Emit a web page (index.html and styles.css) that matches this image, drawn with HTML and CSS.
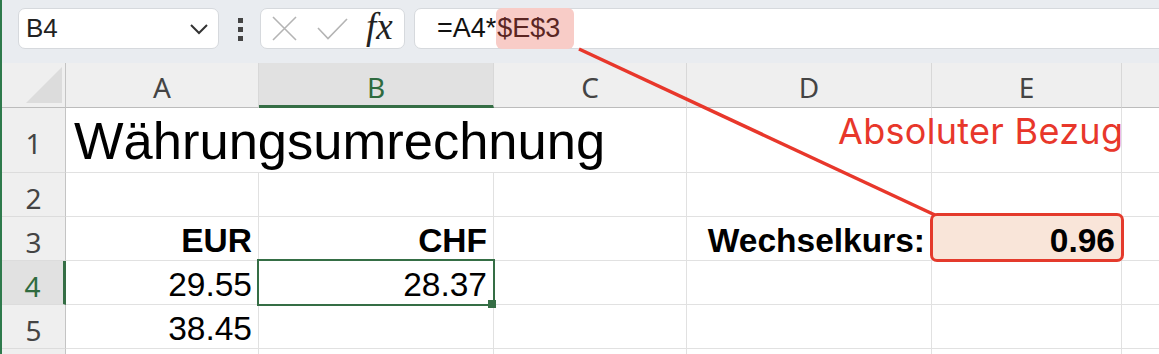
FILE: index.html
```html
<!DOCTYPE html>
<html lang="de">
<head>
    <meta charset="UTF-8">
    <title>Währungsumrechnung</title>
    <link rel="stylesheet" href="styles.css">
</head>
<body>
<div class="app">
    <div class="toolbar">
        <div class="namebox">
            <span>B4</span>
            <svg width="20" height="12" viewBox="0 0 20 12"><path d="M2 2 L10 10 L18 2" fill="none" stroke="#333" stroke-width="2"/></svg>
        </div>
        <div class="dots"><i></i><i></i><i></i></div>
        <div class="btns">
            <svg width="25" height="25" viewBox="0 0 25 25"><path d="M1 1 L24 24 M24 1 L1 24" stroke="#b4b4b4" stroke-width="1.6"/></svg>
            <svg width="31" height="23" viewBox="0 0 31 23"><path d="M1 11 L11 21.5 L30 2" fill="none" stroke="#b4b4b4" stroke-width="1.6"/></svg>
            <span class="fx">fx</span>
        </div>
        <div class="formula">=A4*<span class="ref">$E$3</span></div>
    </div>

    <div class="sheet">
        <!-- header -->
        <div class="hd corner"><i></i></div>
        <div class="hd">A</div>
        <div class="hd on">B</div>
        <div class="hd">C</div>
        <div class="hd">D</div>
        <div class="hd">E</div>
        <div class="hd"></div>

        <!-- row 1 -->
        <div class="rh">1</div>
        <div class="c title">Währungsumrechnung</div>
        <div class="c"></div>
        <div class="c"></div>
        <div class="c"></div>

        <!-- row 2 -->
        <div class="rh">2</div>
        <div class="c"></div>
        <div class="c"></div>
        <div class="c"></div>
        <div class="c"></div>
        <div class="c"></div>
        <div class="c"></div>

        <!-- row 3 -->
        <div class="rh">3</div>
        <div class="c b">EUR</div>
        <div class="c b">CHF</div>
        <div class="c"></div>
        <div class="c b">Wechselkurs:</div>
        <div class="c b callout"><span>0.96</span></div>
        <div class="c"></div>

        <!-- row 4 -->
        <div class="rh on">4</div>
        <div class="c">29.55</div>
        <div class="c sel">28.37</div>
        <div class="c"></div>
        <div class="c"></div>
        <div class="c"></div>
        <div class="c"></div>

        <!-- row 5 -->
        <div class="rh">5</div>
        <div class="c">38.45</div>
        <div class="c"></div>
        <div class="c"></div>
        <div class="c"></div>
        <div class="c"></div>
        <div class="c"></div>

        <!-- row 6, only its top edge is visible -->
        <div class="rh"></div>
        <div class="c"></div>
        <div class="c"></div>
        <div class="c"></div>
        <div class="c"></div>
        <div class="c"></div>
        <div class="c"></div>
    </div>

    <svg class="arrow" width="1159" height="354" viewBox="0 0 1159 354">
        <line x1="579" y1="49" x2="935" y2="215" stroke="#e8372b" stroke-width="3.5"/>
    </svg>
    <div class="note">Absoluter Bezug</div>
</div>
</body>
</html>
```

FILE: styles.css
```css
body {
    margin: 0;
    background: #ffffff;
    font-family: "Liberation Sans", Arial, sans-serif;
}
.app {
    position: relative;
    width: 1159px;
    height: 354px;
    overflow: hidden;
    border-left: 2px solid #2e7a4c;
    box-sizing: border-box;
}

/* toolbar */
.toolbar {
    height: 63px;
    background: #e9ecf0;
    display: flex;
    align-items: flex-start;
    padding: 8px 0 0 16px;
    box-sizing: border-box;
}
.namebox {
    width: 201px;
    height: 41px;
    box-sizing: border-box;
    background: #fff;
    border: 1px solid #d6d9dd;
    border-radius: 7px;
    display: flex;
    align-items: center;
    justify-content: space-between;
    padding: 0 9px 0 7px;
    font-size: 26px;
    color: #222;
}
.dots {
    margin: 10px 17px 0 19px;
    display: flex;
    flex-direction: column;
    gap: 4px;
}
.dots i {
    display: block;
    width: 5px;
    height: 5px;
    background: #444;
}
.btns {
    width: 145px;
    height: 41px;
    box-sizing: border-box;
    background: #fff;
    border: 1px solid #d6d9dd;
    border-radius: 7px;
    display: flex;
    align-items: center;
    padding: 0 0 0 11px;
    gap: 20px;
}
.fx {
    font-family: "Liberation Serif", "Times New Roman", serif;
    font-style: italic;
    font-size: 37px;
    color: #222;
    margin-left: -2px;
    margin-top: -4px;
}
.formula {
    flex: 1;
    height: 41px;
    margin: 0 -20px 0 9px;
    box-sizing: border-box;
    background: #fff;
    border: 1px solid #d6d9dd;
    border-radius: 7px;
    display: flex;
    align-items: center;
    padding-left: 22px;
    font-size: 27px;
    color: #111;
}
.formula .ref {
    align-self: stretch;
    margin: -1px 0;
    display: flex;
    align-items: center;
    padding: 0 14px 0 1px;
    background: #f8ccc7;
    border-radius: 6px;
    color: #5a2623;
}

/* sheet */
.sheet {
    display: grid;
    grid-template-columns: 64px 193px 235px 193px 245px 190px 40px;
    grid-template-rows: 45px 65px 44px 44px 44px 44px 10px;
}
.hd {
    background: #efefef;
    border-bottom: 1px solid #bcbcbc;
    border-right: 1px solid #d8d8d8;
    display: flex;
    align-items: center;
    justify-content: center;
    padding-top: 4px;
    box-sizing: border-box;
    font-family: "Noto Sans", sans-serif;
    font-size: 28px;
    color: #444;
}
.hd.on {
    background: #e1e1e1;
    color: #2f6b3f;
    border-bottom: 3px solid #356e45;
    padding-top: 6px;
}
.hd.corner {
    border-right: 1px solid #c4c4c4;
    align-items: flex-end;
    justify-content: flex-end;
    padding: 0 3px 4px 0;
}
.hd.corner i {
    display: block;
    width: 36px;
    height: 36px;
    background: #dcdcdc;
    clip-path: polygon(100% 0, 100% 100%, 0 100%);
}
.rh {
    background: #efefef;
    border-right: 1px solid #c4c4c4;
    border-bottom: 1px solid #dcdcdc;
    display: flex;
    align-items: center;
    justify-content: center;
    padding-top: 6px;
    box-sizing: border-box;
    font-family: "Noto Sans", sans-serif;
    font-size: 28px;
    color: #444;
}
.rh.on {
    background: #e1e1e1;
    color: #2f6b3f;
    border-right: 3px solid #356e45;
}
.c {
    border-right: 1px solid #e1e1e1;
    border-bottom: 1px solid #e1e1e1;
    box-sizing: border-box;
    display: flex;
    align-items: flex-end;
    justify-content: flex-end;
    padding-right: 6px;
    font-size: 33.5px;
    line-height: 38px;
    color: #000;
    white-space: nowrap;
}
.c.b {
    font-weight: bold;
}
.c.title {
    grid-column: span 3;
    justify-content: flex-start;
    padding: 0 0 1px 8px;
    font-size: 52.5px;
    line-height: 60px;
}
.c.sel {
    position: relative;
}
.c.sel::after {
    content: "";
    position: absolute;
    left: -2px;
    top: -2px;
    right: -2px;
    bottom: -2px;
    border: 2px solid #356e45;
}
.c.sel::before {
    content: "";
    position: absolute;
    right: -3px;
    bottom: -4px;
    width: 8px;
    height: 8px;
    background: #356e45;
    z-index: 1;
}
.c.callout {
    position: relative;
}
.c.callout::before {
    content: "";
    position: absolute;
    left: -2px;
    top: -4px;
    right: -3px;
    bottom: -2px;
    background: #f9e5d9;
    border: 3px solid #e43a2c;
    border-radius: 7px;
}
.c.callout span {
    position: relative;
}

/* annotation */
.arrow {
    position: absolute;
    left: -2px;
    top: 0;
    pointer-events: none;
}
.note {
    position: absolute;
    left: 836px;
    top: 111px;
    font-family: Inter, sans-serif;
    font-size: 36px;
    line-height: 40px;
    letter-spacing: 0.3px;
    color: #e8372b;
    white-space: nowrap;
}
```
